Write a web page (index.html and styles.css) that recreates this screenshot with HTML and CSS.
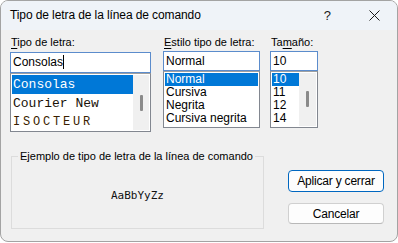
FILE: index.html
```html
<!DOCTYPE html>
<html lang="es">
<head>
    <meta charset="UTF-8">
    <title>Tipo de letra de la línea de comando</title>
    <link rel="stylesheet" href="styles.css">
</head>
<body>
<div class="window">
    <div class="titlebar">
        <span class="title">Tipo de letra de la línea de comando</span>
        <span class="help">?</span>
        <svg class="close" width="11" height="11" viewBox="0 0 11 11">
            <path d="M0.5 0.5 L10.5 10.5 M10.5 0.5 L0.5 10.5" stroke="#1a1a1a" stroke-width="1" fill="none"/>
        </svg>
    </div>

    <div class="content">
        <div class="fonts-row">
            <div class="col col-font">
                <div class="label"><u>T</u>ipo de letra:</div>
                <div class="input input-tall">Consolas<span class="caret"></span></div>
                <div class="list list-font">
                    <div class="rows">
                        <div class="row mono selected">Consolas</div>
                        <div class="row mono">Courier New</div>
                        <div class="row mono wide">ISOCTEUR</div>
                    </div>
                    <div class="scroll"><div class="thumb"></div></div>
                </div>
            </div>

            <div class="col col-style">
                <div class="label"><u>E</u>stilo tipo de letra:</div>
                <div class="input">Normal</div>
                <div class="list list-small">
                    <div class="rows">
                        <div class="row small selected">Normal</div>
                        <div class="row small">Cursiva</div>
                        <div class="row small">Negrita</div>
                        <div class="row small">Cursiva negrita</div>
                    </div>
                </div>
            </div>

            <div class="col col-size">
                <div class="label">Ta<u>m</u>año:</div>
                <div class="input">10</div>
                <div class="list list-small">
                    <div class="rows">
                        <div class="row small selected">10</div>
                        <div class="row small">11</div>
                        <div class="row small">12</div>
                        <div class="row small">14</div>
                    </div>
                    <div class="scroll scroll-size"><div class="thumb"></div></div>
                </div>
            </div>
        </div>

        <div class="bottom-row">
            <fieldset class="sample">
                <legend>Ejemplo de tipo de letra de la línea de comando</legend>
                <div class="sample-text">AaBbYyZz</div>
            </fieldset>
            <div class="buttons">
                <button type="button" class="btn btn-default">Aplicar y cerrar</button>
                <button type="button" class="btn">Cancelar</button>
            </div>
        </div>
    </div>
</div>
</body>
</html>
```

FILE: styles.css
```css
* {
    box-sizing: border-box;
}

body {
    margin: 0;
    background: #ffffff;
    font-family: "Liberation Sans", Arial, sans-serif;
    color: #000000;
}

.window {
    width: 398px;
    height: 242px;
    border: 1px solid #a3a3a3;
    border-radius: 8px;
    overflow: hidden;
    background: #f0f0f0;
}

.titlebar {
    height: 29px;
    background: #eff3f8;
    display: flex;
    align-items: center;
    padding-left: 9px;
}

.title {
    font-size: 12px;
    flex: 1;
    padding-bottom: 1px;
    letter-spacing: -0.1px;
}

.help {
    font-size: 13px;
    margin-right: 38px;
    color: #1a1a1a;
}

.close {
    margin-right: 17px;
}

.content {
    padding: 5px 0 0 9px;
}

.fonts-row {
    display: flex;
    height: 113px;
}

.col {
    display: flex;
    flex-direction: column;
}

.col-font {
    width: 141px;
}

.col-style {
    width: 97px;
    margin-left: 12px;
}

.col-size {
    width: 48px;
    margin-left: 10px;
}

.label {
    font-size: 11px;
    height: 16px;
    line-height: 14px;
    padding-left: 1px;
}

.label u {
    text-decoration-thickness: 1px;
    text-underline-offset: 2px;
}

.input {
    height: 20px;
    border: 1px solid #5b8ccc;
    background: #ffffff;
    font-size: 12px;
    line-height: 18px;
    padding-left: 2px;
}

.input-tall {
    height: 21px;
    line-height: 19px;
    margin-top: 1px;
}

.caret {
    display: inline-block;
    width: 1px;
    height: 14px;
    background: #000000;
    vertical-align: -3px;
}

.list {
    display: flex;
    border: 1px solid #828790;
    border-top-color: #a0a0a0;
    background: #ffffff;
    padding: 1px;
    overflow: hidden;
}

.list-font {
    height: 59px;
}

.list-small {
    height: 57px;
}

.rows {
    flex: 1;
    overflow: hidden;
}

.row {
    white-space: nowrap;
    padding-left: 1px;
}

.row.mono {
    font-family: "Liberation Mono", "DejaVu Sans Mono", monospace;
    font-size: 13px;
    height: 19px;
    line-height: 19px;
    color: #1a1208;
}

.row.wide {
    letter-spacing: 2.8px;
    font-size: 12px;
    color: #3a1e00;
}

.row.small {
    font-size: 12px;
    height: 13px;
    line-height: 13px;
}

.row.selected {
    background: #0078d7;
    color: #ffffff;
}

.scroll {
    width: 16px;
    background: #f0f0f0;
}

.thumb {
    width: 3px;
    height: 16px;
    margin: 20px auto 0;
    background: #8a8a8a;
    border-radius: 1px;
}

.scroll-size {
    width: 17px;
}

.scroll-size .thumb {
    margin-top: 18px;
}

.bottom-row {
    display: flex;
    margin-top: 1px;
}

.sample {
    width: 253px;
    height: 80px;
    margin: 0 0 0 1px;
    padding: 0;
    border: 1px solid #dcdcdc;
    min-width: 0;
}

.sample legend {
    font-size: 11px;
    line-height: 14px;
    padding: 0 2px;
    margin-left: 6px;
}

.sample-text {
    font-family: "DejaVu Sans Mono", "Liberation Mono", monospace;
    font-size: 11px;
    text-align: center;
    margin-top: 26px;
    color: #101010;
}

.buttons {
    display: flex;
    flex-direction: column;
    margin-left: 24px;
    padding-top: 21px;
}

.btn {
    width: 96px;
    height: 22px;
    font-family: "Liberation Sans", Arial, sans-serif;
    font-size: 12px;
    letter-spacing: -0.2px;
    color: #000000;
    background: #fdfdfd;
    border: 1px solid #d0d0d0;
    border-bottom-color: #b8b8b8;
    border-radius: 4px;
    padding: 0;
}

.btn-default {
    border: 1px solid #0067c0;
    margin-bottom: 11px;
}

.btn + .btn {
    height: 21px;
}
```
